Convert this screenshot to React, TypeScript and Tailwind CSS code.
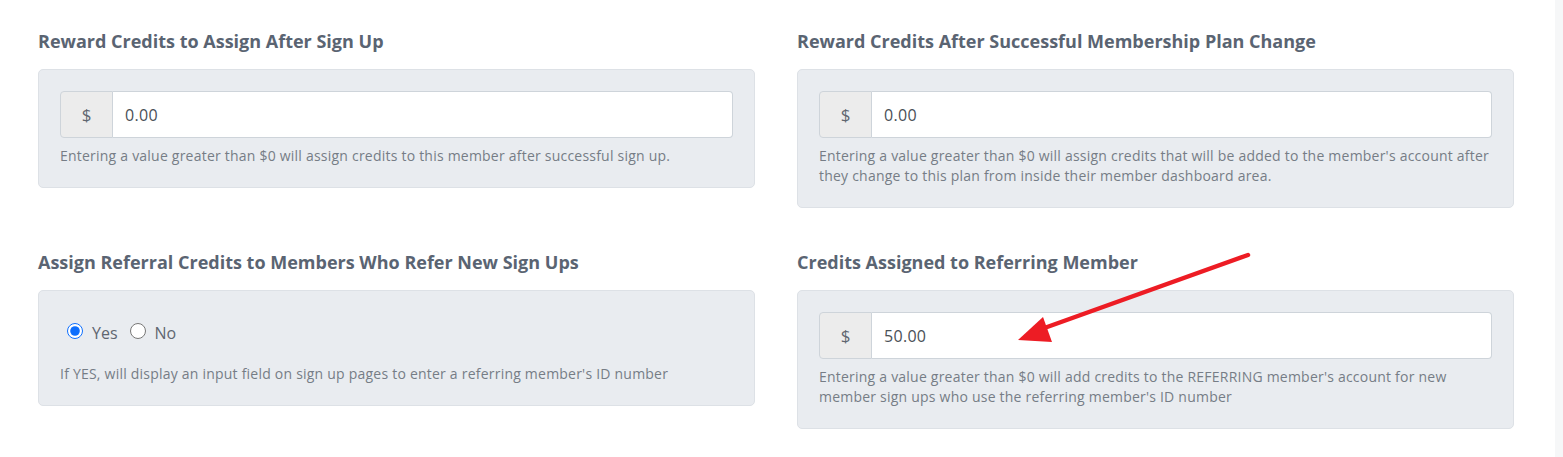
import { useState } from 'react'

function MoneyInput({ value }: { value: string }) {
  return (
    <div className="flex h-[47px] w-full">
      <span className="flex w-[53px] items-center justify-center rounded-l-[4px] border border-[#ced4da] bg-[#ececec] text-[17px] text-[#5f6670]">
        $
      </span>
      <input
        defaultValue={value}
        className="min-w-0 flex-1 rounded-r-[4px] border border-l-0 border-[#ced4da] bg-white px-3 text-[16px] tracking-[0.3px] text-[#495057] outline-none"
      />
    </div>
  )
}

function Section({ title, children }: { title: string; children: React.ReactNode }) {
  return (
    <div>
      <h3 className="pt-[28px] text-[18px] leading-[27px] font-bold text-[#5a6472]">{title}</h3>
      <div className="mt-[14px] rounded-[5px] border border-[#dde1e6] bg-[#e9ecf0] px-[21px] pt-[21px] pb-[21px]">{children}</div>
    </div>
  )
}

function Help({ children }: { children: React.ReactNode }) {
  return <p className="mt-[8px] text-[14px] leading-[20px] tracking-[0.22px] text-[#767d86]">{children}</p>
}

export default function App() {
  const [referral, setReferral] = useState('yes')

  return (
    <div className="relative flex h-[457px] w-full bg-white font-['Open_Sans',sans-serif]">
      <div className="flex-1 pl-[38px]">
        <div className="grid grid-cols-[717px_717px] gap-x-[42px] gap-y-[13px]">
          <Section title="Reward Credits to Assign After Sign Up">
            <MoneyInput value="0.00" />
            <Help>Entering a value greater than $0 will assign credits to this member after successful sign up.</Help>
          </Section>
          <Section title="Reward Credits After Successful Membership Plan Change">
            <MoneyInput value="0.00" />
            <Help>
              Entering a value greater than $0 will assign credits that will be added to the member's account after they
              change to this plan from inside their member dashboard area.
            </Help>
          </Section>
          <Section title="Assign Referral Credits to Members Who Refer New Sign Ups">
            <div className="flex h-[37px] items-center pl-[7px] text-[16px] text-[#5f6670]">
              <label className="flex items-center gap-[9px]">
                <input
                  type="radio"
                  name="ref"
                  checked={referral === 'yes'}
                  onChange={() => setReferral('yes')}
                  className="h-[16px] w-[16px] accent-[#0d6efd]"
                />
                <span className="pt-[5px]">Yes</span>
              </label>
              <label className="ml-[12px] flex items-center gap-[9px]">
                <input
                  type="radio"
                  name="ref"
                  checked={referral === 'no'}
                  onChange={() => setReferral('no')}
                  className="h-[16px] w-[16px] accent-[#0d6efd]"
                />
                <span className="pt-[5px]">No</span>
              </label>
            </div>
            <p className="mt-[15px] text-[14px] leading-[20px] tracking-[0.22px] text-[#767d86]">
              If YES, will display an input field on sign up pages to enter a referring member's ID number
            </p>
          </Section>
          <Section title="Credits Assigned to Referring Member">
            <MoneyInput value="50.00" />
            <Help>
              Entering a value greater than $0 will add credits to the REFERRING member's account for new member sign ups
              who use the referring member's ID number
            </Help>
          </Section>
        </div>
      </div>
      <div className="w-[8px] bg-[#f6f7f8]" />

      <svg className="pointer-events-none absolute top-0 left-0" width="1563" height="457" viewBox="0 0 1563 457">
        <line x1="1248" y1="255" x2="1036" y2="331" stroke="#ed1c24" strokeWidth="4.5" strokeLinecap="round" />
        <polygon points="1018,340 1043,317 1052,342" fill="#ed1c24" />
      </svg>
    </div>
  )
}
